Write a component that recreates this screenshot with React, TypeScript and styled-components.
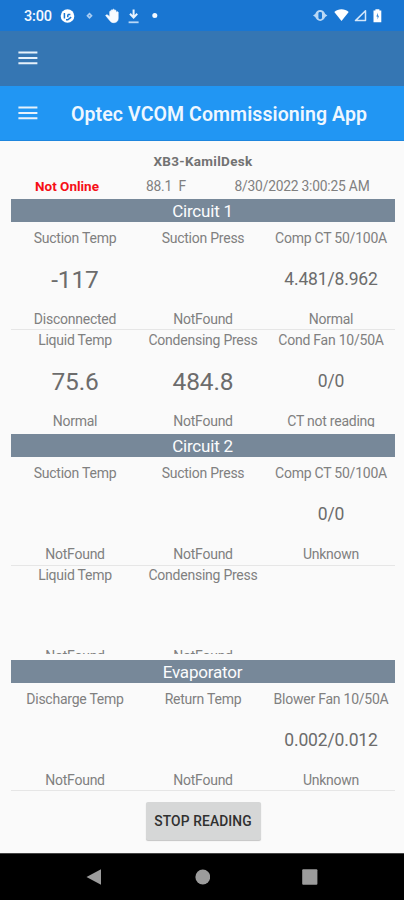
import React from 'react';
import styled, { createGlobalStyle } from 'styled-components';

const GlobalStyle = createGlobalStyle`
  * { box-sizing: border-box; }
  body { margin: 0; background: #fafafa; font-family: Roboto, "Noto Sans", sans-serif; }
`;

const Screen = styled.div`
  width: 404px;
  height: 900px;
  display: flex;
  flex-direction: column;
  overflow: hidden;
  background: #fafafa;
  color: #808080;
`;

const StatusBar = styled.header`
  height: 31px;
  flex: none;
  display: flex;
  align-items: center;
  padding: 1px 22px 0 24px;
  background: #1976d2;
  color: #f4f9ff;
`;

const Clock = styled.span`
  width: 36px;
  padding-top: 1px;
  font-size: 14.5px;
  font-weight: 500;
  line-height: 18px;
  letter-spacing: -0.15px;
`;

const StatusIcons = styled.svg`
  display: block;
  flex: none;
`;

const Spacer = styled.div`
  flex: 1;
`;

const AppBar = styled.div<{ $color: string; $height: number; $edge?: boolean }>`
  height: ${(p) => p.$height}px;
  flex: none;
  display: flex;
  align-items: center;
  padding-left: 18px;
  padding-bottom: ${(p) => (p.$edge ? 0 : 2)}px;
  background: ${(p) => p.$color};
  border-bottom: ${(p) => (p.$edge ? '1px solid #1d86de' : 'none')};
`;

const MenuIcon = styled.svg`
  display: block;
  width: 20px;
  height: 16px;
  flex: none;
`;

const Title = styled.h1`
  margin: 3px 0 0 33px;
  font-size: 19.5px;
  font-weight: 600;
  line-height: 26px;
  letter-spacing: 0.09px;
  color: #eef7ff;
  white-space: nowrap;
`;

const Main = styled.main`
  flex: 1;
  display: flex;
  flex-direction: column;
  padding: 11px 9px 0 11px;
`;

const DeviceName = styled.div`
  height: 19px;
  line-height: 19px;
  font-size: 13.5px;
  font-weight: 700;
  letter-spacing: 0.3px;
  text-align: center;
  color: #727272;
`;

const InfoRow = styled.div`
  height: 28px;
  display: grid;
  grid-template-columns: 112px 86px 186px;
  line-height: 31px;
  font-size: 13.8px;
  letter-spacing: -0.2px;
  text-align: center;
  white-space: pre;
`;

const Connection = styled.span`
  font-size: 13.5px;
  font-weight: 700;
  letter-spacing: 0;
  color: #f60f16;
`;

const Section = styled.section<{ $height: number }>`
  height: ${(p) => p.$height}px;
  flex: none;
`;

const SectionTitle = styled.h2`
  margin: 0;
  padding-right: 1px;
  height: 23px;
  line-height: 25px;
  font-size: 17px;
  font-weight: 400;
  letter-spacing: -0.2px;
  text-align: center;
  color: #fbfcfd;
  background: #778899;
`;

const Readings = styled.div<{ $height: number }>`
  height: ${(p) => p.$height}px;
  padding-top: 7px;
  overflow: hidden;
`;

const ReadingRow = styled.div<{ $height: number; $gap: number }>`
  height: ${(p) => p.$height}px;
  display: grid;
  grid-template-columns: 128px 128px 128px;

  &:first-child {
    margin-bottom: ${(p) => p.$gap}px;
    border-bottom: 1px solid #e6e6e6;
  }
`;

const Reading = styled.div`
  display: grid;
  grid-template-rows: 19px 62px 19px;
  align-content: start;
  text-align: center;
  white-space: nowrap;
`;

const Caption = styled.span`
  font-size: 14px;
  line-height: 19px;
  letter-spacing: -0.24px;
`;

const Value = styled.span<{ $large?: boolean }>`
  font-size: ${(p) => (p.$large ? '24.5px' : '17.5px')};
  line-height: ${(p) => (p.$large ? '63px' : '62px')};
  letter-spacing: -0.15px;
  color: #6c6c6c;
`;

const ButtonRow = styled.div`
  display: flex;
  justify-content: center;
  padding-top: 10px;
`;

const StopButton = styled.button`
  width: 115px;
  height: 38px;
  padding: 0;
  border: 0;
  border-radius: 2px;
  background: #d6d7d7;
  box-shadow: 0 1px 1px rgba(0, 0, 0, 0.22);
  font: 500 13.8px/38px Roboto, "Noto Sans", sans-serif;
  letter-spacing: 0.12px;
  color: #303030;
  white-space: nowrap;
`;

const NavBar = styled.nav`
  height: 47px;
  flex: none;
  display: flex;
  align-items: center;
  justify-content: space-between;
  padding: 0 86px;
  background: #000;
  border-top: 1px solid #444;
`;

const NavIcon = styled.svg`
  display: block;
  width: 16px;
  height: 16px;
  fill: #9c9c9c;
`;

type Cell = { label: string; value?: string; status: string; large?: boolean };
type Group = {
  title: string;
  height: number;
  clip: number;
  rowHeight: number;
  gap: number;
  rows: (Cell | null)[][];
};

const groups: Group[] = [
  {
    title: 'Circuit 1',
    height: 235,
    clip: 205,
    rowHeight: 101,
    gap: 1,
    rows: [
      [
        { label: 'Suction Temp', value: '-117', status: 'Disconnected', large: true },
        { label: 'Suction Press', status: 'NotFound' },
        { label: 'Comp CT 50/100A', value: '4.481/8.962', status: 'Normal' },
      ],
      [
        { label: 'Liquid Temp', value: '75.6', status: 'Normal', large: true },
        { label: 'Condensing Press', value: '484.8', status: 'NotFound', large: true },
        { label: 'Cond Fan 10/50A', value: '0/0', status: 'CT not reading' },
      ],
    ],
  },
  {
    title: 'Circuit 2',
    height: 226,
    clip: 197,
    rowHeight: 102,
    gap: 0,
    rows: [
      [
        { label: 'Suction Temp', status: 'NotFound' },
        { label: 'Suction Press', status: 'NotFound' },
        { label: 'Comp CT 50/100A', value: '0/0', status: 'Unknown' },
      ],
      [
        { label: 'Liquid Temp', status: 'NotFound' },
        { label: 'Condensing Press', status: 'NotFound' },
        null,
      ],
    ],
  },
  {
    title: 'Evaporator',
    height: 132,
    clip: 109,
    rowHeight: 101,
    gap: 0,
    rows: [
      [
        { label: 'Discharge Temp', status: 'NotFound' },
        { label: 'Return Temp', status: 'NotFound' },
        { label: 'Blower Fan 10/50A', value: '0.002/0.012', status: 'Unknown' },
      ],
    ],
  },
];

const Hamburger = () => (
  <MenuIcon viewBox="0 0 20 16">
    <path d="M0.4 2.5H19.4M0.4 8H19.4M0.4 13.2H19.4" stroke="#e6f1fb" strokeWidth="2.1" fill="none" />
  </MenuIcon>
);

const Notifications = () => (
  <StatusIcons width="100" height="18" viewBox="60 7 100 18">
    <circle cx="67.5" cy="16" r="6.8" fill="#fff" />
    <path d="M67.8 14.6h2.6M67.8 14.6v2.6M64.4 13v5.600M66 19.800h1.800l3.400-2.600" fill="none" stroke="#1976d2" strokeWidth="1.500" />
    <path d="M89.5 12.6l3.2 3.2-3.2 3.2-3.2-3.2z" fill="#a9cdf2" />
    <circle cx="89.5" cy="15.8" r="0.8" fill="#3c8bdc" />
    <path
      d="M118.2 12.2v6.4c0 2.4-1.8 4.1-4.2 4.1-2 0-3.3-.9-4.3-2.3l-4.100-4.900c.8-.9 1.800-.8 2.600-.1l1.500 1.300v-4.900c0-1 1.400-1 1.400 0v-1.200c0-1.100 1.600-1.100 1.600 0v-.6c0-1.100 1.700-1.100 1.700 0v.8c0-1 1.600-1 1.600 0v1.900c0-1.200 2.200-1.200 2.200-.5z"
      fill="#f8fbff"
      stroke="#f8fbff"
      strokeWidth="0.600"
    />
    <path d="M133.600 9.500v7.500M130 13.800l3.600 3.800 3.600-3.800" fill="none" stroke="#e9f4ff" strokeWidth="2" />
    <path d="M128.600 22.300h10" stroke="#b9d8f7" strokeWidth="1.800" />
    <circle cx="154.800" cy="15.600" r="2.500" fill="#f3f9ff" />
  </StatusIcons>
);

const SystemIcons = () => (
  <StatusIcons width="70" height="18" viewBox="312 7 70 18">
    <path
      d="M313 15.500l2.200-1.600c1-2.200 2.600-3.800 5-3.800s4 1.600 5 3.800l2.200 1.600-2.200 1.600c-1 2.200-2.600 3.800-5 3.800s-4-1.600-5-3.800z"
      fill="#b9d8f5"
    />
    <rect x="318.400" y="12" width="3.600" height="7.200" rx="1.400" fill="#1976d2" />
    <path d="M334.300 12c3.800-3.800 10.600-3.800 14.400 0l-7.200 9z" fill="#fff" />
    <path d="M355.500 20.600h10V10.700z" fill="none" stroke="#d4e7fa" strokeWidth="1.500" strokeLinejoin="round" />
    <path d="M375.400 9.300h4v1.300h1.900v11.600h-7.800V10.600h1.900z" fill="#fff" />
    <path d="M377.800 12.800l-1.400 3.600h1.200v3l1.300-3.700h-1.100z" fill="#1976d2" />
  </StatusIcons>
);

const ReadingCell = ({ cell }: { cell: Cell | null }) => (
  <Reading>
    {cell && (
      <>
        <Caption>{cell.label}</Caption>
        <Value $large={cell.large}>{cell.value}</Value>
        <Caption>{cell.status}</Caption>
      </>
    )}
  </Reading>
);

export default function App() {
  return (
    <>
      <GlobalStyle />
      <Screen>
        <StatusBar>
          <Clock>3:00</Clock>
          <Notifications />
          <Spacer />
          <SystemIcons />
        </StatusBar>
        <AppBar $color="#3576b3" $height={55}>
          <Hamburger />
        </AppBar>
        <AppBar $color="#2196f3" $height={55} $edge>
          <Hamburger />
          <Title>Optec VCOM Commissioning App</Title>
        </AppBar>
        <Main>
          <DeviceName>XB3-KamilDesk</DeviceName>
          <InfoRow>
            <Connection>Not Online</Connection>
            <span>88.1  F</span>
            <span>8/30/2022 3:00:25 AM</span>
          </InfoRow>
          {groups.map((group) => (
            <Section key={group.title} $height={group.height}>
              <SectionTitle>{group.title}</SectionTitle>
              <Readings $height={group.clip}>
                {group.rows.map((row, i) => (
                  <ReadingRow key={i} $height={group.rowHeight} $gap={group.gap}>
                    {row.map((cell, j) => (
                      <ReadingCell key={j} cell={cell} />
                    ))}
                  </ReadingRow>
                ))}
              </Readings>
            </Section>
          ))}
          <ButtonRow>
            <StopButton>STOP READING</StopButton>
          </ButtonRow>
        </Main>
        <NavBar>
          <NavIcon viewBox="0 0 16 16">
            <path d="M0.500 8L15 0.200V15.800Z" />
          </NavIcon>
          <NavIcon viewBox="0 0 16 16">
            <circle cx="8.800" cy="8" r="7.400" />
          </NavIcon>
          <NavIcon viewBox="0 0 16 16">
            <rect x="0.200" y="0.300" width="15.200" height="15.400" rx="1" />
          </NavIcon>
        </NavBar>
      </Screen>
    </>
  );
}
